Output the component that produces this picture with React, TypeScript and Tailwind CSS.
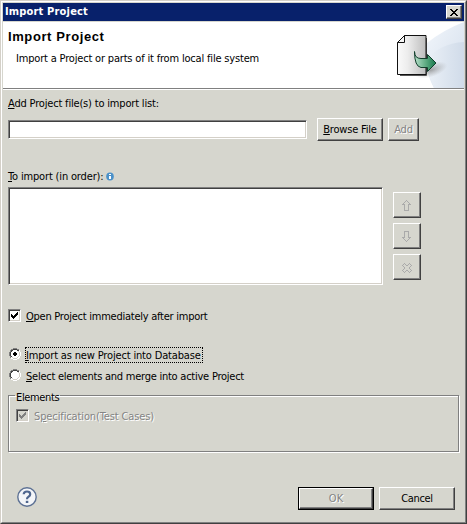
import type { ReactNode } from "react";

const raised =
  "border border-t-white border-l-white border-r-[#404040] border-b-[#404040] shadow-[inset_-1px_-1px_0_#808080]";
const sunken =
  "border border-t-[#808080] border-l-[#808080] border-r-white border-b-white bg-white shadow-[inset_1px_1px_0_#404040,inset_-1px_-1px_0_#d4d0c8]";
const etched = "text-[#848484] [text-shadow:1px_1px_0_#fff]";

function Key({ children }: { children: ReactNode }) {
  return <span className="underline decoration-1 underline-offset-[1px]">{children}</span>;
}

function Check({ disabled = false }: { disabled?: boolean }) {
  return (
    <span className={`block h-[13px] w-[13px] shrink-0 ${sunken}`}>
      <svg width="11" height="11" viewBox="0 0 11 11" shapeRendering="crispEdges" className="block">
        {disabled && <path d="M1 1h9v9H1z" fill="#d6d6ce" />}
        <path
          d="M2 4h1v3H2zM3 5h1v3H3zM4 6h1v3H4zM5 5h1v3H5zM6 4h1v3H6zM7 3h1v3H7zM8 2h1v3H8z"
          fill={disabled ? "#808080" : "#000"}
        />
      </svg>
    </span>
  );
}

function Radio({ checked = false }: { checked?: boolean }) {
  return (
    <svg width="12" height="12" viewBox="0 0 12 12" shapeRendering="crispEdges" className="block shrink-0">
      <path d="M4 1h4v1h2v2h1v4h-1v2H8v1H4v-1H2V8H1V4h1V2h2z" fill="#fff" />
      <path d="M4 0h4v1H4zM2 1h2v1H2zM8 1h2v1H8zM1 2h1v2H1zM0 4h1v4H0zM1 8h1v2H1z" fill="#808080" />
      <path d="M4 1h4v1H4zM2 2h2v1H2zM8 2h2v1H8zM2 3h1v1H2zM1 4h1v4H1zM2 8h1v1H2z" fill="#404040" />
      <path d="M10 2h1v2h-1zM11 4h1v4h-1zM10 8h1v2h-1zM8 10h2v1H8zM4 11h4v1H4zM2 10h2v1H2z" fill="#fff" />
      <path d="M9 3h1v1H9zM10 4h1v4h-1zM9 8h1v1H9zM8 9h1v1H8zM4 10h4v1H4zM3 9h1v1H3z" fill="#d4d0c8" />
      {checked && <path d="M5 4h2v1h1v2H7v1H5V7H4V5h1z" fill="#000" />}
    </svg>
  );
}

function ToolButton({ d }: { d: string }) {
  return (
    <button className={`flex h-[26px] w-7 items-start pt-[7px] pl-2 ${raised}`}>
      <svg width="10" height="11" viewBox="0 0 10 11" fill="#aaa" shapeRendering="crispEdges" className="block">
        <path d={d} />
      </svg>
    </button>
  );
}

function ImportArt() {
  return (
    <svg width="96" height="66" viewBox="368 22 96 66" className="block">
      <defs>
        <linearGradient id="swirl" x1="0" y1="0" x2="1" y2="1">
          <stop offset="0" stopColor="#f2f6fb" />
          <stop offset="1" stopColor="#d3deec" />
        </linearGradient>
        <linearGradient id="swirlLow" x1="0" y1="0" x2="1" y2="0">
          <stop offset="0" stopColor="#edf2f8" />
          <stop offset="1" stopColor="#d0dbe9" />
        </linearGradient>
        <linearGradient id="page" x1="0" y1="0" x2="1" y2="0">
          <stop offset="0" stopColor="#fafafa" />
          <stop offset="0.35" stopColor="#ededed" />
          <stop offset="1" stopColor="#bdbdbd" />
        </linearGradient>
        <linearGradient id="arrow" x1="0" y1="0" x2="1" y2="0">
          <stop offset="0" stopColor="#b7dfca" />
          <stop offset="0.5" stopColor="#62ad85" />
          <stop offset="1" stopColor="#16784b" />
        </linearGradient>
        <radialGradient id="shade">
          <stop offset="0" stopColor="#777" stopOpacity="0.65" />
          <stop offset="1" stopColor="#999" stopOpacity="0" />
        </radialGradient>
      </defs>
      <path d="M464 22Q443 30 427 43Q423 68 434 88H464Z" fill="url(#swirl)" />
      <path d="M464 42Q439 43 424 63Q429 75 434 88H464Z" fill="url(#swirlLow)" />
      <ellipse cx="431" cy="70" rx="17" ry="7" transform="rotate(-18 431 70)" fill="url(#shade)" />
      <path d="M400 75.5h26.5V38" fill="none" stroke="#555" />
      <path d="M404.5 35.5h21.5v39h-28.5v-32z" fill="url(#page)" stroke="#111" />
      <path d="M404.5 35.5v7h-7z" fill="#f5f5f5" stroke="#111" strokeLinejoin="round" />
      <path
        d="M414.5 51.5Q414.5 58.5 421 58.5H427.5V54.5L436 63L427.5 71.5V67.5H421Q414.5 66.5 414.5 51.5Z"
        fill="url(#arrow)"
        stroke="#123f2c"
      />
    </svg>
  );
}

export default function App() {
  return (
    <div className="h-[524px] w-[467px] border border-t-[#d4d0c8] border-l-[#d4d0c8] border-r-[#404040] border-b-[#404040] bg-[#d6d6ce] font-['DejaVu_Sans_Condensed','DejaVu_Sans',sans-serif] text-[11px] leading-[14px] text-black">
      <div className="h-full border border-t-white border-l-white border-r-[#808080] border-b-[#808080] px-px pt-px">
        <header className="flex h-[18px] items-center justify-between bg-[#08216b] pr-[2px] pl-[2px] text-white">
          <span className="text-[11px] font-bold tracking-[0.17px] whitespace-nowrap">Import Project</span>
          <button className={`flex h-[14px] w-4 items-center justify-center bg-[#d6d6ce] ${raised}`}>
            <svg width="8" height="7" viewBox="0 0 8 7" shapeRendering="crispEdges">
              <path
                d="M0 0h2v1h1v1h2V1h1V0h2v1H7v1H6v1H5v1h1v1h1v1h1v1H6V6H5V5H3v1H2v1H0V6h1V5h1V4h1V3H2V2H1V1H0z"
                fill="#000"
              />
            </svg>
          </button>
        </header>

        <section className="mt-px flex h-[67px] justify-between border-b border-[#808080] bg-white pl-[5px]">
          <div className="pt-[7px]">
            <h1 className="font-['Liberation_Sans',Arial,sans-serif] text-[13px] leading-4 font-bold tracking-[0.6px] whitespace-nowrap">
              Import Project
            </h1>
            <p className="mt-[7px] pl-2 tracking-[-0.18px] whitespace-nowrap">
              Import a Project or parts of it from local file system
            </p>
          </div>
          <ImportArt />
        </section>

        <main className="border-t border-white pl-[5px]">
          <p className="mt-[7px] tracking-[-0.18px] whitespace-nowrap">
            <Key>A</Key>dd Project file(s) to import list:
          </p>
          <div className="mt-[7px] flex items-center">
            <div className={`h-[19px] w-[299px] ${sunken}`} />
            <button className={`ml-[10px] h-[23px] w-[66px] tracking-[-0.2px] whitespace-nowrap ${raised}`}>
              <Key>B</Key>rowse File
            </button>
            <button className={`ml-[5px] h-[23px] w-[31px] tracking-[-0.2px] ${raised} ${etched}`}>Add</button>
          </div>

          <div className="mt-[29px] flex items-center tracking-[-0.16px] whitespace-nowrap">
            <span>
              <Key>T</Key>o import (in order):
            </span>
            <svg width="8" height="9" viewBox="0 0 8 9" className="mb-0.5 ml-[3px] block">
              <ellipse cx="4" cy="4.5" rx="3.8" ry="4" fill="#4b91c9" />
              <path d="M3 2h2v1H3zM3 4h2v3H3z" fill="#fff" />
            </svg>
          </div>
          <div className="mt-[3px] flex">
            <div className={`h-[98px] w-[375px] ${sunken}`} />
            <div className="ml-[10px] flex flex-col gap-[5px] pt-[5px]">
              <ToolButton d="M4 0h1v1H4zM3 1h1v1H3zM5 1h1v1H5zM2 2h1v1H2zM6 2h1v1H6zM1 3h1v1H1zM7 3h1v1H7zM0 4h3v1H0zM6 4h3v1H6zM2 5h1v6H2zM6 5h1v6H6zM3 10h3v1H3z" />
              <ToolButton d="M2 0h5v1H2zM2 1h1v5H2zM6 1h1v5H6zM0 6h3v1H0zM6 6h3v1H6zM1 7h1v1H1zM7 7h1v1H7zM2 8h1v1H2zM6 8h1v1H6zM3 9h1v1H3zM5 9h1v1H5zM4 10h1v1H4z" />
              <ToolButton d="M2 1h1v1H2zM7 1h1v1H7zM1 2h1v1H1zM3 2h1v1H3zM6 2h1v1H6zM8 2h1v1H8zM0 3h1v1H0zM4 3h2v1H4zM9 3h1v1H9zM1 4h1v1H1zM8 4h1v1H8zM2 5h1v2H2zM7 5h1v2H7zM1 7h1v1H1zM8 7h1v1H8zM0 8h1v1H0zM4 8h2v1H4zM9 8h1v1H9zM1 9h1v1H1zM3 9h1v1H3zM6 9h1v1H6zM8 9h1v1H8zM2 10h1v1H2zM7 10h1v1H7z" />
            </div>
          </div>

          <div className="mt-6 flex h-[13px] items-center gap-[5px] tracking-[-0.25px] whitespace-nowrap">
            <Check />
            <span className="pt-0.5">
              <Key>O</Key>pen Project immediately after import
            </span>
          </div>
          <div className="mt-[25px] flex h-4 pl-px">
            <span className="mt-px">
              <Radio checked />
            </span>
            <span className="ml-1 block h-4 w-[178px] border border-dotted border-black pt-px leading-[14px] tracking-[-0.16px] whitespace-nowrap">
              <Key>I</Key>mport as new Project into Database
            </span>
          </div>
          <div className="mt-[5px] flex h-[14px] items-center gap-[5px] pl-px tracking-[-0.24px] whitespace-nowrap">
            <Radio />
            <span className="pt-1">
              <Key>S</Key>elect elements and merge into active Project
            </span>
          </div>

          <fieldset className="mt-[6px] h-[64px] w-[451px] border border-[#808080] pl-[7px] shadow-[1px_1px_0_#fff,inset_1px_1px_0_#fff]">
            <legend className="-ml-px h-[14px] px-px pt-[3px] tracking-[-0.35px] whitespace-nowrap">Elements</legend>
            <div className={`mt-[7px] flex h-[13px] items-center gap-[5px] tracking-[-0.12px] whitespace-nowrap ${etched}`}>
              <Check disabled />
              <span className="pt-0.5">
                S<Key>p</Key>ecification(Test Cases)
              </span>
            </div>
          </fieldset>

          <footer className="mt-[35px] flex items-start pl-[9px]">
            <svg width="20" height="21" viewBox="0 0 20 21" className="block">
              <circle cx="10" cy="10" r="9.2" fill="#f3f5f8" stroke="#5d7194" strokeWidth="1.4" />
              <path
                d="M6.7 7.3Q6.8 4.5 10 4.5Q13.2 4.5 13.2 7.3Q13.2 8.8 11.5 9.7Q10 10.5 10 12.2"
                fill="none"
                stroke="#4f668e"
                strokeWidth="2.2"
              />
              <path d="M8.8 13.8h2.5V16H8.8z" fill="#4f668e" />
            </svg>
            <button className="ml-[261px] h-[23px] w-[76px] border border-black">
              <span className={`flex h-full items-center justify-center ${raised} ${etched}`}>OK</span>
            </button>
            <button className={`ml-[5px] h-[23px] w-[76px] tracking-[-0.35px] ${raised}`}>Cancel</button>
          </footer>
        </main>
      </div>
    </div>
  );
}
